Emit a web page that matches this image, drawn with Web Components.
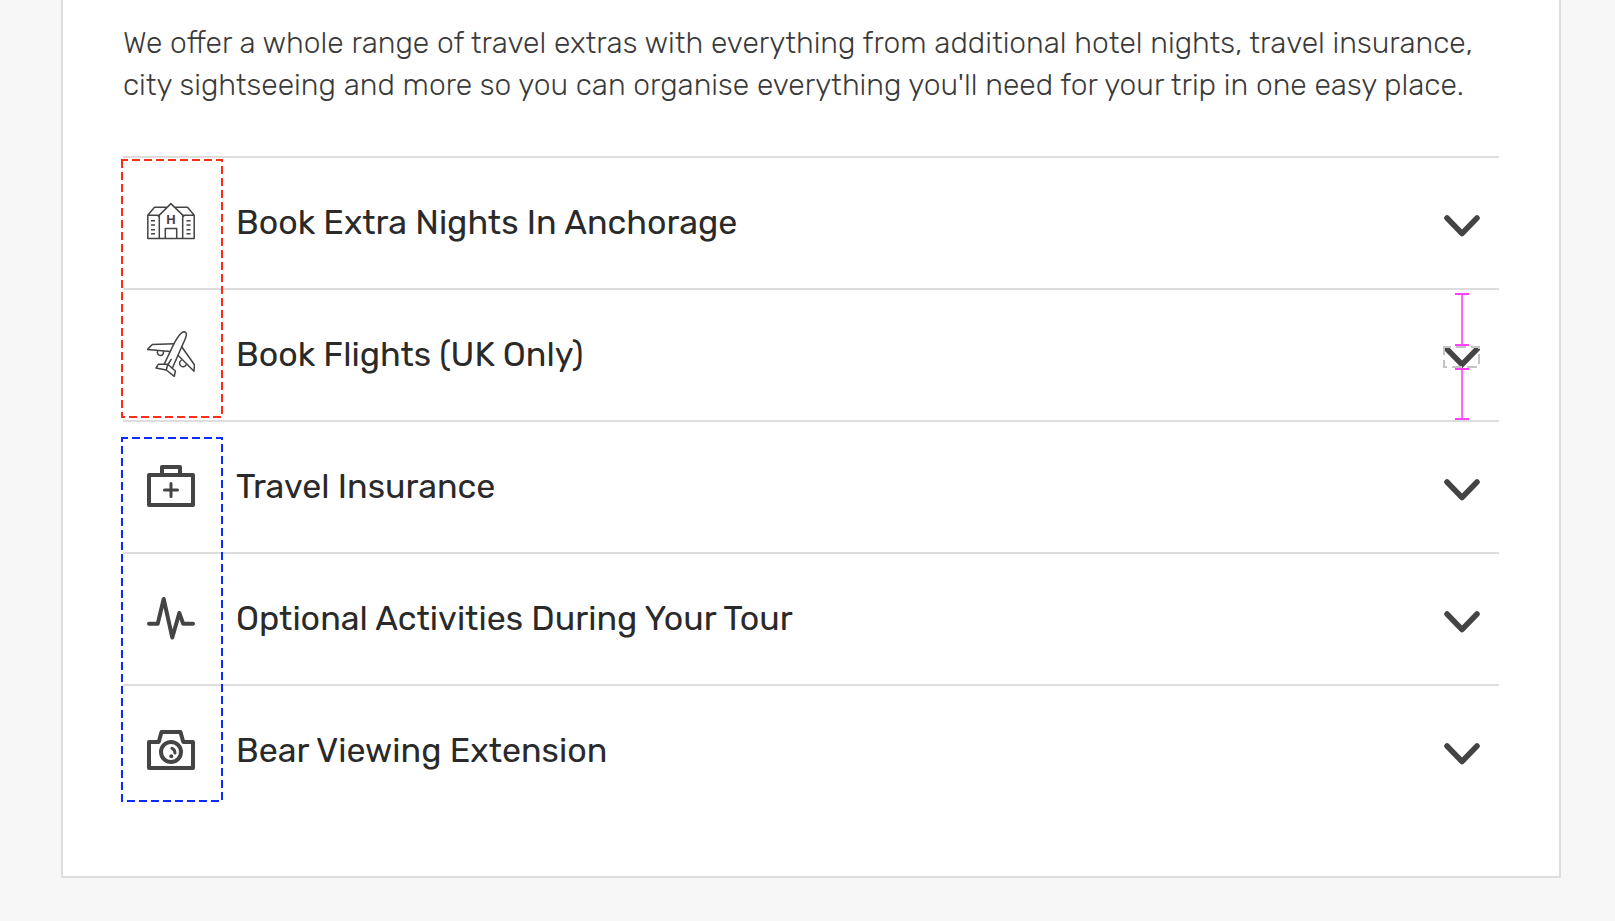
<!DOCTYPE html>
<html lang="en">
<head>
<meta charset="utf-8">
<title>Travel extras</title>
<style>
  body { margin: 0; background: #f7f7f7; font-family: Rubik, Inter, "Noto Sans", sans-serif; color: #3a3a3a; }
</style>
</head>
<body>
<extras-card>
  <span slot="intro">We offer a whole range of travel extras with everything from additional hotel nights, travel insurance, city sightseeing and more so you can organise everything you'll need for your trip in one easy place.</span>
  <extras-group tone="red">
    <extras-row icon="hotel">Book Extra Nights In Anchorage</extras-row>
    <extras-row icon="plane" measured>Book Flights (UK Only)</extras-row>
  </extras-group>
  <extras-group tone="blue">
    <extras-row icon="case">Travel Insurance</extras-row>
    <extras-row icon="pulse">Optional Activities During Your Tour</extras-row>
    <extras-row icon="camera">Bear Viewing Extension</extras-row>
  </extras-group>
</extras-card>

<script>
const ICONS = {
  hotel: `<g stroke-width="1.5" stroke-linejoin="round">
      <path d="M12.3 16.3H.8v23.3h46.4V16.3H35.7M12.3 16.3v23.3M35.7 16.3v23.3M10.8 17.6 23.9 4.6l13.3 13M.8 16.3l6.7-8h12.6M47.2 16.3l-6.7-8H27.8M18.3 39.6V29.4h11.4v10.2"/>
      <path d="M4 21.7h4M4 26h4M4 30.7h4M4 34.7h4M39.5 21.7h4M39.5 26h4M39.5 30.7h4M39.5 34.7h4"/></g>
      <text x="24" y="25" text-anchor="middle" font-family="Liberation Sans, sans-serif" font-weight="700" font-size="13" fill="currentColor" stroke="none">H</text>`,
  plane: `<g stroke-width="1.5" stroke-linejoin="round" stroke-linecap="round">
      <path d="M17.3 32.8 27 12.7C30.5 6 33.5.8 37 .7c2.7 0 2.7 2.8 1.8 5.6-1 3-2.6 6.300-4.100 9.400L25.300 37.300"/>
      <path d="M27 12.700 5.300 13.400.5 18.400 23.300 20.600M34.700 15.700 47.400 33.700 47 40.300 31 24.300"/>
      <path d="M10.600 19.800c-.8 2.800.8 4.700 2.700 4.700s3.200-1.200 3.200-3.800M34.200 29.300c-2.200 1.200-2 4.300-.2 5.700 2 1.400 4.600.6 5.300-1.500"/>
      <path d="M20.700 33.300H11.300L9 37l10.300 2z M20.700 33.300 28.400 40l-1.100 5.300-8-6.300M24.200 28.300l-3.200 5.200"/></g>`,
  case: `<g stroke-width="4" stroke-linejoin="round"><rect x="2" y="12" width="44" height="30"/><path d="M15 12V4h18v8"/></g>
      <path stroke-width="3" stroke-linecap="round" d="M24 20.500v13M17.500 27h13"/>`,
  pulse: `<path stroke-width="4" stroke-linejoin="round" stroke-linecap="round" d="M2 28.700h8.700L16.700 4l8.600 38.500 7-24.500 3.900 10.700H46"/>`,
  camera: `<g stroke-width="4" stroke-linejoin="round"><path d="M2 15h9.700L14.500 5h19l2.800 10H46v26H2z"/><circle cx="24" cy="25" r="10"/></g>
      <path stroke-width="3" stroke-linecap="round" d="M25 21.300c2 .8 3 2.400 3 4.700"/><circle cx="24.300" cy="29.300" r="2" fill="currentColor" stroke="none"/>`
};

class BaseElement extends HTMLElement {
  connectedCallback() {
    if (!this.shadowRoot) this.attachShadow({ mode: "open" }).innerHTML = this.template();
  }
}

customElements.define("line-icon", class extends BaseElement {
  template() {
    return `<style>
      :host { display: block; width: 48px; height: 48px; color: #444; }
      svg { display: block; }
    </style>
    <svg width="48" height="48" viewBox="0 0 48 48" fill="none" stroke="currentColor" aria-hidden="true">${ICONS[this.getAttribute("name")]}</svg>`;
  }
});

/* Down arrow; with "measured" it also carries its bounding box and spacing guides. */
customElements.define("row-chevron", class extends BaseElement {
  template() {
    const measured = this.hasAttribute("measured");
    const arrow = measured
      ? `<path stroke-width="5.5" d="M-1-1 18 18.500 37-1"/>`
      : `<path stroke-width="5.5" stroke-linecap="round" stroke-linejoin="round" d="M3 4l15 15.500L33 4"/>`;
    const guides = `<span class="guide up"></span><span class="guide down"></span>
      <svg class="bounds" width="37" height="22"><rect x="1" y="1" width="35" height="20" fill="none" stroke="#c4c4c4" stroke-width="2" stroke-dasharray="10 5" stroke-dashoffset="3"/></svg>`;
    return `<style>
      :host { display: block; position: relative; width: 36px; height: 22px; color: #444; }
      svg { display: block; }
      .arrow { overflow: ${measured ? "hidden" : "visible"}; }
      .bounds { position: absolute; left: -1px; top: 0; }
      .guide { position: absolute; left: 11px; width: 14px; box-sizing: border-box; height: 53px;
        border: solid #ff40ff; border-width: 2px 0;
        background: linear-gradient(#ff66ff, #ff66ff) center / 2px 100% no-repeat; }
      .up { bottom: 22px; }
      .down { top: 22px; height: 52px; }
    </style>
    <svg class="arrow" width="36" height="22" viewBox="0 0 36 22" fill="none" stroke="currentColor" aria-hidden="true">${arrow}</svg>${measured ? guides : ""}`;
  }
});

customElements.define("extras-row", class extends BaseElement {
  template() {
    return `<style>
      :host { display: block; border-top: 2px solid #ddd; }
      button { display: flex; align-items: center; width: 100%; min-height: 130px; margin: 0; padding: 0 19px 0 24px;
        border: 0; background: none; color: #2a2a2a; font: 400 34px/40px Rubik, Inter, "Noto Sans", sans-serif; text-align: left; cursor: pointer; }
      .label { flex: 1; margin-left: 41px; }
      row-chevron { margin-top: 4px; }
    </style>
    <button type="button" aria-expanded="false">
      <line-icon name="${this.getAttribute("icon")}"></line-icon>
      <span class="label"><slot></slot></span>
      <row-chevron${this.hasAttribute("measured") ? " measured" : ""}></row-chevron>
    </button>`;
  }
});

customElements.define("extras-group", class extends BaseElement {
  template() {
    return `<style>
      :host { display: block; position: relative; }
      .outline { position: absolute; left: -2px; top: 3px; bottom: 2px; width: 102px; color: #ff2c16; pointer-events: none; }
      :host([tone="blue"]) .outline { top: 17px; bottom: 14px; color: #0a2cff; }
      svg { display: block; width: 100%; height: 100%; }
      rect { width: calc(100% - 2px); height: calc(100% - 2px); }
    </style>
    <slot></slot>
    <div class="outline"><svg aria-hidden="true"><rect x="1" y="1" fill="none" stroke="currentColor" stroke-width="2" stroke-dasharray="8 4" stroke-dashoffset="2"/></svg></div>`;
  }
});

customElements.define("extras-card", class extends BaseElement {
  template() {
    return `<style>
      :host { display: block; margin: 0 54px 43px 61px; padding: 22px 60px 60px; border: 2px solid #ddd; border-top: 0; background: #fff; }
      p { margin: 0 0 50px; font-size: 30px; line-height: 42px; font-weight: 300; }
    </style>
    <p><slot name="intro"></slot></p>
    <slot></slot>`;
  }
});
</script>
</body>
</html>
